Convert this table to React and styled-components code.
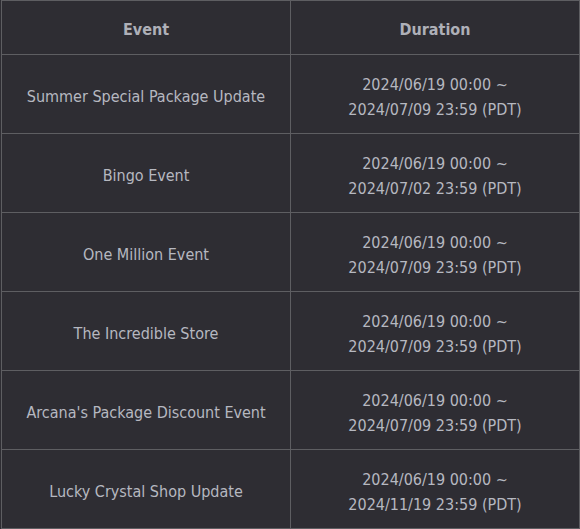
import React from 'react';
import styled, { createGlobalStyle } from 'styled-components';

const GlobalStyle = createGlobalStyle`
  html, body {
    margin: 0;
    padding: 0;
    background: #2e2d33;
  }
`;

const Table = styled.table`
  width: 579px;
  margin-left: 1px;
  border-collapse: collapse;
  background-color: #2e2d33;
  font-family: "DejaVu Sans Condensed", "DejaVu Sans", "Liberation Sans", sans-serif;
  font-stretch: semi-condensed;
  font-size: 16px;
  color: #b6b8c0;
  table-layout: fixed;
`;

const Head = styled.th`
  height: 49px;
  padding: 4px 0 0;
  border: 1px solid #5e5e62;
  font-weight: bold;
  color: #aeb0b8;
  text-align: center;
  vertical-align: middle;
`;

const Cell = styled.td`
  height: 73px;
  padding: 5px 0 0;
  border: 1px solid #5e5e62;
  text-align: center;
  vertical-align: middle;
  line-height: 25px;
`;

const events = [
  { name: 'Summer Special Package Update', end: '2024/07/09 23:59 (PDT)' },
  { name: 'Bingo Event', end: '2024/07/02 23:59 (PDT)' },
  { name: 'One Million Event', end: '2024/07/09 23:59 (PDT)' },
  { name: 'The Incredible Store', end: '2024/07/09 23:59 (PDT)' },
  { name: "Arcana's Package Discount Event", end: '2024/07/09 23:59 (PDT)' },
  { name: 'Lucky Crystal Shop Update', end: '2024/11/19 23:59 (PDT)' },
];

const App = () => (
  <>
    <GlobalStyle />
    <Table>
      <thead>
        <tr>
          <Head>Event</Head>
          <Head>Duration</Head>
        </tr>
      </thead>
      <tbody>
        {events.map(ev => (
          <tr key={ev.name}>
            <Cell>{ev.name}</Cell>
            <Cell>
              2024/06/19 00:00 ~
              <br />
              {ev.end}
            </Cell>
          </tr>
        ))}
      </tbody>
    </Table>
  </>
);

export default App;
